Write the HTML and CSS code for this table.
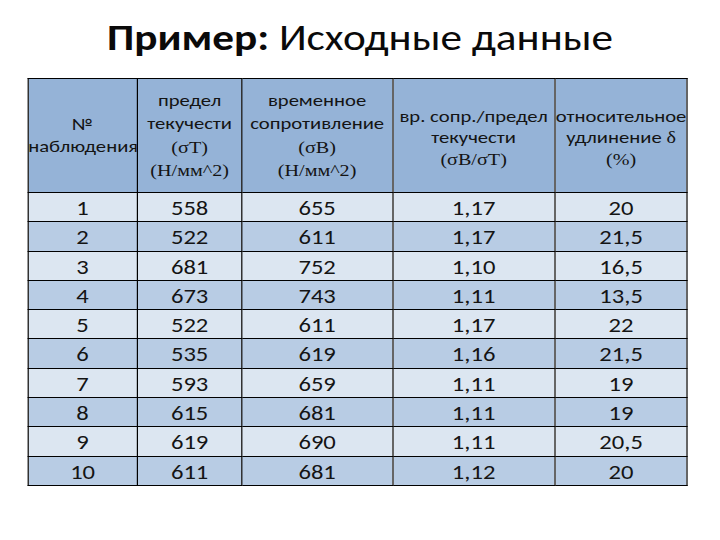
FILE: index.html
```html
<!DOCTYPE html>
<html lang="ru">
<head>
<meta charset="utf-8">
<title>Пример: Исходные данные</title>
<link rel="stylesheet" href="styles.css">
</head>
<body>
<div class="slide">
<h1 class="title"><b>Пример:</b> Исходные данные</h1>
<table class="data">
  <colgroup>
    <col class="c1"><col class="c2"><col class="c3"><col class="c4"><col class="c5">
  </colgroup>
  <thead>
    <tr class="head">
      <th>№<br>наблюдения</th>
      <th class="tall">предел<br>текучести<br><span class="serif">(σT)</span><br><span class="serif">(Н/мм^2)</span></th>
      <th class="tall">временное<br>сопротивление<br><span class="serif">(σB)</span><br><span class="serif">(Н/мм^2)</span></th>
      <th class="short">вр. сопр./предел<br>текучести<br><span class="serif">(σB/σT)</span></th>
      <th class="short">относительное<br>удлинение <span class="serif">δ</span><br><span class="serif">(%)</span></th>
    </tr>
  </thead>
  <tbody>
    <tr><td>1</td><td>558</td><td>655</td><td>1,17</td><td>20</td></tr>
    <tr><td>2</td><td>522</td><td>611</td><td>1,17</td><td>21,5</td></tr>
    <tr><td>3</td><td>681</td><td>752</td><td>1,10</td><td>16,5</td></tr>
    <tr><td>4</td><td>673</td><td>743</td><td>1,11</td><td>13,5</td></tr>
    <tr><td>5</td><td>522</td><td>611</td><td>1,17</td><td>22</td></tr>
    <tr><td>6</td><td>535</td><td>619</td><td>1,16</td><td>21,5</td></tr>
    <tr><td>7</td><td>593</td><td>659</td><td>1,11</td><td>19</td></tr>
    <tr><td>8</td><td>615</td><td>681</td><td>1,11</td><td>19</td></tr>
    <tr><td>9</td><td>619</td><td>690</td><td>1,11</td><td>20,5</td></tr>
    <tr><td>10</td><td>611</td><td>681</td><td>1,12</td><td>20</td></tr>
  </tbody>
</table>
</div>
</body>
</html>
```
FILE: styles.css
```css
html, body {
  margin: 0;
  padding: 0;
  background: #ffffff;
}
body {
  width: 720px;
  height: 540px;
  overflow: hidden;
  font-family: "Carlito", "Open Sans", "Noto Sans", sans-serif;
  color: #141414;
}
/* the slide is rendered 1.2x wider than tall, as in the reference */
.slide {
  width: 600px;
  transform: scaleX(1.2);
  transform-origin: 0 0;
}
.title {
  margin: 0;
  height: 78px;
  box-sizing: border-box;
  padding-top: 16px;
  text-align: center;
  font-size: 36px;
  font-weight: 400;
  line-height: 44px;
  color: #0a0a0a;
}
.title b {
  font-weight: 700;
}
.data {
  margin-left: 22.5px;
  border-collapse: collapse;
  table-layout: fixed;
  width: 550px;
}
.c1 { width: 91.7px; }
.c2 { width: 86.7px; }
.c3 { width: 125.8px; }
.c4 { width: 135px; }
.c5 { width: 110.8px; }
.data th, .data td {
  border: 1px solid #000000;
  padding: 0;
  text-align: center;
  overflow: hidden;
  white-space: nowrap;
}
.data th {
  background: #95b3d7;
  font-weight: 400;
  font-size: 17.2px;
  line-height: 22px;
  height: 108px;
  vertical-align: middle;
}
.data th.tall {
  line-height: 23.5px;
}
.data th.short {
  line-height: 21.5px;
  padding-top: 5px;
}
.serif {
  font-family: "Liberation Serif", "Times New Roman", serif;
  font-size: 16.8px;
}
.data td {
  font-size: 20.5px;
  line-height: 26.3px;
  padding-top: 2px;
}
.data tbody tr:nth-child(odd) td {
  background: #dce6f1;
}
.data tbody tr:nth-child(even) td {
  background: #b8cce4;
}
```
